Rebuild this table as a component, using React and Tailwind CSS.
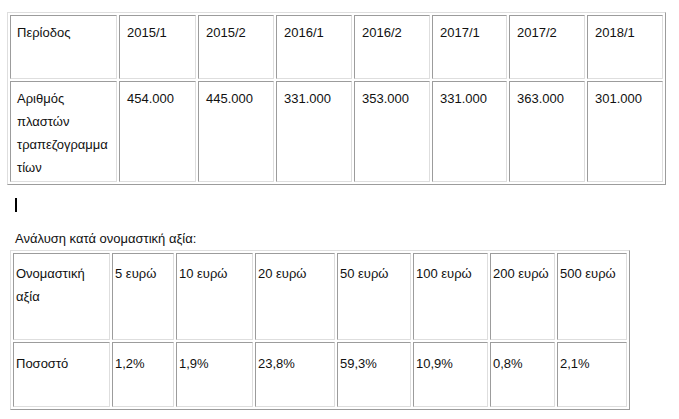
import React from 'react';

// Classic HTML tables: outset outer border, inset cell borders
const periods = ['2015/1', '2015/2', '2016/1', '2016/2', '2017/1', '2017/2', '2018/1'];
const cards = ['454.000', '445.000', '331.000', '353.000', '331.000', '363.000', '301.000'];
const periodWidths = ['w-[77px]', 'w-[76px]', 'w-[76px]', 'w-[76px]', 'w-[75px]', 'w-[76px]', 'w-[76px]'];

const values = ['5 ευρώ', '10 ευρώ', '20 ευρώ', '50 ευρώ', '100 ευρώ', '200 ευρώ', '500 ευρώ'];
const shares = ['1,2%', '1,9%', '23,8%', '59,3%', '10,9%', '0,8%', '2,1%'];
const valueWidths = ['w-[62px]', 'w-[77px]', 'w-[80px]', 'w-[74px]', 'w-[75px]', 'w-[65px]', 'w-[70px]'];

const outer = 'border border-t-[#dedede] border-l-[#dedede] border-r-[#9c9c9c] border-b-[#9c9c9c] border-separate border-spacing-[2px] table-fixed';
const cell = 'border border-t-[#9c9c9c] border-l-[#9c9c9c] border-r-[#dedede] border-b-[#dedede] align-top';

export default function App() {
    return (
        <div className="min-h-[419px] w-[679px] bg-white text-[13px] leading-[23px] text-[#111]" style={{ fontFamily: '"Liberation Sans", Arial, sans-serif' }}>
            <div className="pl-[7px] pt-[12px]">
                <table className={`${outer} w-[659px]`}>
                    <tbody>
                        <tr>
                            <td className={`${cell} w-[107px] h-[64px] pl-[6px] pt-[5px]`}>Περίοδος</td>
                            {periods.map((p, i) => (
                                <td key={p} className={`${cell} ${periodWidths[i]} pl-[7px] pt-[5px]`}>{p}</td>
                            ))}
                        </tr>
                        <tr>
                            <td className={`${cell} h-[101px] pl-[6px] pt-[5px]`}>
                                Αριθμός<br />πλαστών<br />τραπεζογραμμα<br />τίων
                            </td>
                            {cards.map((c, i) => (
                                <td key={i} className={`${cell} pl-[7px] pt-[5px]`}>{c}</td>
                            ))}
                        </tr>
                    </tbody>
                </table>
            </div>

            {/* text cursor left in the editor */}
            <div className="ml-[15px] mt-[13px] h-[14px] w-[2px] bg-black"></div>

            <p className="ml-[15px] mt-[15px]">Ανάλυση κατά ονομαστική αξία:</p>

            <div className="pl-[10px]">
                <table className={`${outer} w-[620px]`}>
                    <tbody>
                        <tr>
                            <td className={`${cell} w-[97px] h-[87px] pl-[2px] pt-[8px]`}>
                                Ονομαστική<br />αξία
                            </td>
                            {values.map((v, i) => (
                                <td key={v} className={`${cell} ${valueWidths[i]} pl-[2px] pt-[8px] whitespace-nowrap`}>{v}</td>
                            ))}
                        </tr>
                        <tr>
                            <td className={`${cell} h-[65px] pl-[2px] pt-[9px]`}>Ποσοστό</td>
                            {shares.map((s, i) => (
                                <td key={i} className={`${cell} pl-[2px] pt-[9px]`}>{s}</td>
                            ))}
                        </tr>
                    </tbody>
                </table>
            </div>
        </div>
    );
}
